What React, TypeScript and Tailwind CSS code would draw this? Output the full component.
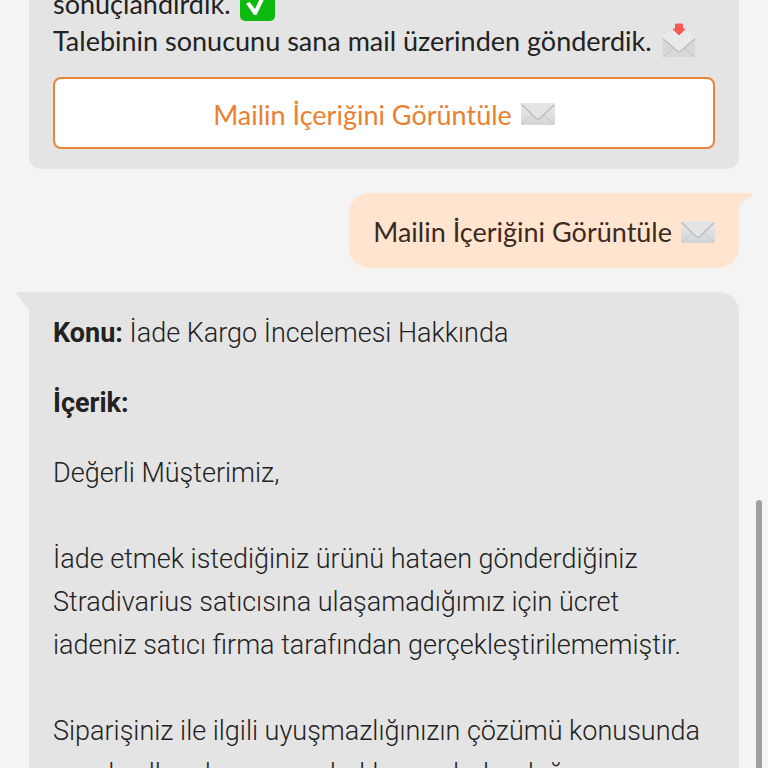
import type { ReactNode } from "react";

const paragraphs = [
  ["İade etmek istediğiniz ürünü hataen gönderdiğiniz", "Stradivarius satıcısına ulaşamadığımız için ücret", "iadeniz satıcı firma tarafından gerçekleştirilememiştir."],
  ["Siparişiniz ile ilgili uyuşmazlığınızın çözümü konusunda", "yasal yollara başvurma hakkınızın bulunduğunu"],
];

function Envelope() {
  return (
    <svg viewBox="0 0 34 22" className="h-[22px] w-[34px] shrink-0" aria-hidden="true">
      <defs>
        <linearGradient id="paper" x1="0" y1="0" x2="0" y2="1">
          <stop offset="0" stopColor="#ebebeb" />
          <stop offset="1" stopColor="#d3d4d6" />
        </linearGradient>
      </defs>
      <rect width="34" height="22" rx="1" fill="url(#paper)" />
      <path d="M1 21 12.5 11M33 21 21.5 11" stroke="#c6c7c9" strokeWidth="1" fill="none" />
      <path d="M0 .5h34L19 15.2q-2 1.8-4 0Z" fill="#e4e4e5" />
      <path d="M.5 1.5 15 15.2q2 1.8 4 0L33.5 1.5" stroke="#b9babc" strokeWidth="1.2" fill="none" />
    </svg>
  );
}

function IncomingEnvelope() {
  return (
    <svg viewBox="0 0 34 36" className="ml-[3px] inline-block h-9 w-[34px] align-[-8px]" aria-hidden="true">
      <path d="M1 13h32v20a1 1 0 0 1-1 1H2a1 1 0 0 1-1-1Z" fill="#d8d8d8" />
      <path d="M1 34 12.5 24.5M33 34 21.5 24.5" stroke="#c6c6c6" strokeWidth="1" fill="none" />
      <path d="M0 14.5 6 9h22l6 5.5-14.5 13q-2.5 2.2-5 0Z" fill="#e9e9e9" />
      <path d="m1 15.5 13.5 12q2.5 2.2 5 0L33 15.5" stroke="#bcbcbc" strokeWidth="1.2" fill="none" />
      <path d="M13.5 1h7v5H23l-6 6-6-6h2.500Z" fill="#f55a56" stroke="#f55a56" strokeLinejoin="round" />
    </svg>
  );
}

function CheckMark() {
  return (
    <svg viewBox="0 0 35 35" className="ml-[3px] inline-block h-[35px] w-[35px] align-[-7px]" aria-hidden="true">
      <rect width="35" height="35" rx="5" fill="#0dba10" />
      <path d="M6 17.500 9.500 16 15 23 23.500 5l4 1L16.500 29h-2.500Z" fill="#fff" />
    </svg>
  );
}

function BotBubble({ tail, className, children }: { tail?: boolean; className: string; children: ReactNode }) {
  return (
    <section className={`relative bg-[#e4e4e4] px-6 ${className}`}>
      {tail && (
        <svg viewBox="0 0 14 18" className="absolute top-0 -left-[14px] h-[18px] w-[14px]" aria-hidden="true">
          <path d="M0 0h14v18Z" fill="#e4e4e4" />
        </svg>
      )}
      {children}
    </section>
  );
}

export default function App() {
  return (
    <div className="relative h-screen overflow-hidden bg-[#f4f4f4] font-['Lato',sans-serif] text-[27px] leading-[37px] text-[#222]">
      <main className="-mt-[15px] flex flex-col gap-6 pr-[29px] pl-[29px]">
        <BotBubble className="rounded-b-xl pb-5">
          <p>
            sonuçlandırdık. <CheckMark />
          </p>
          <p>
            Talebinin sonucunu sana mail üzerinden gönderdik. <IncomingEnvelope />
          </p>
          <button className="mt-[18px] flex h-[72px] w-full items-center justify-center gap-[9px] rounded-lg border-2 border-[#e98438] bg-white pt-[2px] text-[#e98130]">
            Mailin İçeriğini Görüntüle <Envelope />
          </button>
        </BotBubble>

        <section className="relative flex h-[75px] items-center gap-[9px] self-end rounded-[20px] rounded-tr-none bg-[#ffe4d0] px-6 pt-[2px] text-[#3b2a20]">
          <svg viewBox="0 0 14 14" className="absolute top-0 -right-[14px] h-[14px] w-[14px]" aria-hidden="true">
            <path d="M0 0h13q1 2-2 4Q3 8 0 14Z" fill="#ffe4d0" />
          </svg>
          Mailin İçeriğini Görüntüle <Envelope />
        </section>

        <BotBubble tail className="rounded-tr-[20px] rounded-b-[20px] py-5 font-['Roboto',sans-serif] leading-[43px] font-light">
          <p>
            <strong className="font-bold">Konu:</strong> İade Kargo İncelemesi Hakkında
          </p>
          <p className="mt-[27px] font-bold">İçerik:</p>
          <p className="mt-[27px]">Değerli Müşterimiz,</p>
          {paragraphs.map((lines) => (
            <p key={lines[0]} className="mt-[43px]">
              {lines.map((line) => (
                <span key={line} className="block">
                  {line}
                </span>
              ))}
            </p>
          ))}
        </BotBubble>
      </main>
      <div className="absolute top-[500px] right-[6px] bottom-0 w-[6px] rounded-t-full bg-[#9f9f9f]" />
    </div>
  );
}
